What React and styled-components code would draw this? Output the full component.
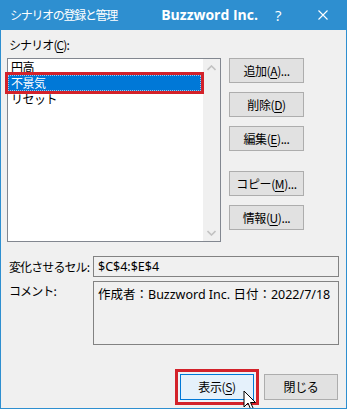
import React from "react";
import styled, { createGlobalStyle } from "styled-components";

const Global = createGlobalStyle`
  html, body { margin: 0; padding: 0; background: #ffffff; }
  * { box-sizing: border-box; }
`;

const jp = `"Noto Sans CJK JP", "Noto Sans", sans-serif`;
const mixed = `"Noto Sans", "Noto Sans CJK JP", sans-serif`;

const Window = styled.div`
  width: 347px;
  height: 409px;
  border: 1px solid #2e8fd0;
  border-top: none;
  background: #f0f0f0;
  display: flex;
  flex-direction: column;
  position: relative;
  overflow: hidden;
  font-family: ${jp};
  font-size: 12px;
  color: #000;
`;

const TitleBar = styled.div`
  height: 30px;
  flex: none;
  background: #2e8fd0;
  display: flex;
  align-items: center;
  padding-left: 9px;
  color: #fff;
`;

const TitleText = styled.div`
  flex: 1;
  font-size: 12px;
  letter-spacing: -1.3px;
  line-height: 30px;
`;

const Brand = styled.div`
  font-family: "Open Sans", "Noto Sans", sans-serif;
  font-weight: 700;
  font-size: 14px;
  margin-right: 17px;
  line-height: 30px;
`;

const Help = styled.div`
  font-family: "Open Sans", "Noto Sans", sans-serif;
  font-size: 15px;
  width: 8px;
  margin-right: 35px;
  line-height: 30px;
`;

const Close = styled.div`
  width: 10px;
  height: 10px;
  margin-right: 18px;
  display: flex;
`;

const Body = styled.div`
  flex: 1;
  display: flex;
  flex-direction: column;
  padding: 7px 7px 0 6px;
`;

const Label = styled.div`
  line-height: 16px;
  height: 16px;
  padding-left: 2px;
  padding-top: ${(p) => p.$top || 0}px;
  white-space: nowrap;
  letter-spacing: -0.9px;
`;

const Mn = styled.span`
  text-decoration: underline;
  text-underline-offset: 2px;
`;

const TopRow = styled.div`
  display: flex;
  gap: 8px;
  margin-top: 5px;
`;

const ListBox = styled.div`
  width: 214px;
  height: 184px;
  border: 1px solid #828790;
  background: #fff;
  display: flex;
`;

const Items = styled.div`
  flex: 1;
  display: flex;
  flex-direction: column;
`;

const Item = styled.div`
  height: 16px;
  line-height: 16px;
  padding-left: 3px;
  margin-right: 2px;
  position: relative;
  letter-spacing: -0.5px;
  ${(p) =>
    p.$selected &&
    `
    background: #0078d7;
    color: #fff;
    box-shadow: 0 0 0 3px #d3222a;
    &::after {
      content: "";
      position: absolute;
      inset: 0;
      border: 1px dotted rgba(255,255,255,0.6);
    }
  `}
`;

const ScrollBar = styled.div`
  width: 17px;
  background: #f0f0f0;
  display: flex;
  flex-direction: column;
  justify-content: space-between;
  align-items: center;
  padding: 6px 0 5px;
`;

const ButtonColumn = styled.div`
  display: flex;
  flex-direction: column;
`;

const Button = styled.button`
  width: ${(p) => p.$w || 75}px;
  height: ${(p) => p.$h || 25}px;
  margin-top: ${(p) => p.$mt || 0}px;
  background: #e1e1e1;
  border: 1px solid #adadad;
  border-radius: 0;
  padding: 0;
  font-family: ${jp};
  font-size: 12px;
  letter-spacing: -0.4px;
  color: #000;
  line-height: 1;
  ${(p) =>
    p.$default &&
    `
    background: #e5f1fb;
    border-color: #0078d7;
    box-shadow: 0 0 0 2px #eef3f7, 0 0 0 5px #d3222a;
  `}
`;

const FieldGrid = styled.div`
  display: grid;
  grid-template-columns: 86px 1fr;
  row-gap: 4px;
  margin-top: 14px;
`;

const Field = styled.div`
  height: ${(p) => p.$h}px;
  border: 1px solid #828282;
  background: #f0f0f0;
  padding: ${(p) => p.$pad};
  font-family: ${mixed};
  font-size: 12.5px;
  line-height: 19px;
  white-space: nowrap;
`;

const Footer = styled.div`
  display: flex;
  justify-content: flex-end;
  gap: 10px;
  margin-top: 29px;
  padding-right: 1px;
`;

const Cursor = styled.svg`
  position: absolute;
  left: 242px;
  top: 390px;
`;

const Chevron = ({ up }) => (
  <svg width="9" height="6" viewBox="0 0 9 6">
    <path
      d={up ? "M0.5 5 L4.5 1 L8.5 5" : "M0.5 1 L4.5 5 L8.5 1"}
      fill="none"
      stroke="#c2c2c2"
      strokeWidth="1.6"
    />
  </svg>
);

export default function App() {
  return (
    <>
      <Global />
      <Window>
        <TitleBar>
          <TitleText>シナリオの登録と管理</TitleText>
          <Brand>Buzzword Inc.</Brand>
          <Help>?</Help>
          <Close>
            <svg width="10" height="10" viewBox="0 0 10 10">
              <path d="M0.5 0.5 L9.5 9.5 M9.5 0.5 L0.5 9.5" stroke="#fff" strokeWidth="1.1" />
            </svg>
          </Close>
        </TitleBar>
        <Body>
          <Label>
            シナリオ(<Mn>C</Mn>):
          </Label>
          <TopRow>
            <ListBox>
              <Items>
                <Item>円高</Item>
                <Item $selected>不景気</Item>
                <Item>リセット</Item>
              </Items>
              <ScrollBar>
                <Chevron up />
                <Chevron />
              </ScrollBar>
            </ListBox>
            <ButtonColumn>
              <Button>
                追加(<Mn>A</Mn>)...
              </Button>
              <Button $mt={9}>
                削除(<Mn>D</Mn>)
              </Button>
              <Button $mt={9}>
                編集(<Mn>E</Mn>)...
              </Button>
              <Button $mt={20}>
                コピー(<Mn>M</Mn>)...
              </Button>
              <Button $mt={9}>
                情報(<Mn>U</Mn>)...
              </Button>
            </ButtonColumn>
          </TopRow>
          <FieldGrid>
            <Label $top={3}>変化させるセル:</Label>
            <Field $h={21} $pad="0 4px">$C$4:$E$4</Field>
            <Label $top={2}>コメント:</Label>
            <Field $h={64} $pad="3px 4px">作成者：Buzzword Inc. 日付：2022/7/18</Field>
          </FieldGrid>
          <Footer>
            <Button $w={74} $h={26} $default>
              表示(<Mn>S</Mn>)
            </Button>
            <Button $w={74} $h={26}>
              閉じる
            </Button>
          </Footer>
        </Body>
        <Cursor width="14" height="22" viewBox="0 0 14 22">
          <path
            d="M1 1 L1 17 L5 13 L8 20 L10.5 19 L7.5 12.5 L12.5 12.5 Z"
            fill="#fff"
            stroke="#000"
            strokeWidth="1"
            strokeLinejoin="miter"
          />
        </Cursor>
      </Window>
    </>
  );
}
